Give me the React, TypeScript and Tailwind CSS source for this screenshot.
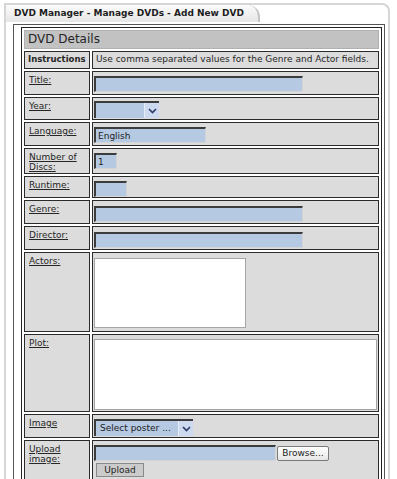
import type { ReactNode } from 'react';

const cell = 'border border-[#2b2b2b] bg-[#dcdcdc] align-top';
const blueInput =
  'block h-[16px] bg-[#b6c9e2] border-t-2 border-l-2 border-[#3c3c3c] border-r border-b border-r-[#d4d4d4] border-b-[#d4d4d4] px-[2px] text-[9px] leading-[12px] text-[#222]';

function Row({ label, h, children }: { label: ReactNode; h: string; children?: ReactNode }) {
  return (
    <tr>
      <td className={`${cell} px-[4px] pt-[3px] text-[9px] leading-[10px] ${h}`}>
        <span className="underline">{label}</span>
      </td>
      <td className={`${cell} px-[1px] pt-[2px] ${h}`}>{children}</td>
    </tr>
  );
}

function Chevron() {
  return (
    <svg width="9" height="6" viewBox="0 0 9 6">
      <path d="M1 1 L4.5 4.5 L8 1" stroke="#2a3a6a" strokeWidth="1.6" fill="none" />
    </svg>
  );
}

export default function App() {
  return (
    <div className="w-[397px] h-[479px] overflow-hidden bg-white text-[8.5px] text-[#262626] font-['DejaVu_Sans','Verdana',sans-serif]">
      <div className="ml-[4px] mt-[3px] w-[386px] h-[480px] border-2 border-b-0 border-[#d6d6d6] rounded-tr-[8px]">
        {/* Tab */}
        <div className="w-[254px] h-[17px] bg-gradient-to-b from-[#fbfbfb] to-[#e6e6e6] border-r-2 border-[#c4c4c4] rounded-tr-[12px] pl-[8px] pt-[3px] text-[9px] leading-[11px] font-bold text-[#1e1e1e] whitespace-nowrap">
          DVD Manager - Manage DVDs - Add New DVD
        </div>

        {/* Content box */}
        <div className="mt-[2px] ml-[7px] w-[372px] h-[470px] border-l border-t border-r border-[#555] pl-[7px] pt-[2px]">
          <table className="w-[361px] border border-[#222] border-separate border-spacing-[2px] table-fixed">
            <colgroup>
              <col className="w-[66px]" />
              <col />
            </colgroup>
            <tbody>
              <tr>
                <td colSpan={2} className="h-[19px] bg-[#c2c2c2] border border-[#b0b0b0] px-[3px] text-[12px] leading-[17px] text-[#262626]">
                  DVD Details
                </td>
              </tr>
              <tr>
                <td className={`${cell} h-[18px] px-[3px] font-bold leading-[15px]`}>Instructions</td>
                <td className={`${cell} h-[18px] px-[3px] text-[9px] leading-[15px] whitespace-nowrap`}>
                  Use comma separated values for the Genre and Actor fields.
                </td>
              </tr>

              <Row label="Title:" h="h-[24px]">
                <div className={`${blueInput} w-[209px] mt-[2px]`} />
              </Row>

              <Row label="Year:" h="h-[23px]">
                <div className="mt-[1px] flex h-[17px] w-[65px] border-t-2 border-l-2 border-[#3c3c3c] bg-[#b6c9e2]">
                  <div className="flex-1" />
                  <div className="w-[15px] flex items-center justify-center bg-[#cdd9ee] border-l border-[#e8eef8]">
                    <Chevron />
                  </div>
                </div>
              </Row>

              <Row label="Language:" h="h-[24px]">
                <div className={`${blueInput} w-[112px] mt-[2px] pt-[1px]`}>English</div>
              </Row>

              <Row
                label={
                  <>
                    Number of
                    <br />
                    Discs:
                  </>
                }
                h="h-[26px]"
              >
                <div className={`${blueInput} w-[23px] mt-[2px] pt-[1px]`}>1</div>
              </Row>

              <Row label="Runtime:" h="h-[22px]">
                <div className={`${blueInput} w-[33px] mt-[2px]`} />
              </Row>

              <Row label="Genre:" h="h-[24px]">
                <div className={`${blueInput} w-[209px] mt-[3px] bg-[#acc2e6]`} />
              </Row>

              <Row label="Director:" h="h-[24px]">
                <div className={`${blueInput} w-[209px] mt-[3px] bg-[#acc2e6]`} />
              </Row>

              <Row label="Actors:" h="h-[80px]">
                <div className="mt-[3px] h-[70px] w-[152px] bg-white border border-[#a6a6a6]" />
              </Row>

              <Row label="Plot:" h="h-[78px]">
                <div className="mt-[2px] h-[71px] w-[283px] bg-white border border-[#a6a6a6]" />
              </Row>

              <Row label="Image" h="h-[24px]">
                <div className="mt-[2px] flex h-[17px] w-[99px] border-t-2 border-l-2 border-[#3c3c3c] bg-[#b6c9e2]">
                  <div className="flex-1 pl-[4px] text-[9px] leading-[14px] text-[#222] whitespace-nowrap">Select poster ...</div>
                  <div className="w-[15px] flex items-center justify-center bg-[#cdd9ee] border-l border-[#e8eef8]">
                    <Chevron />
                  </div>
                </div>
              </Row>

              <Row
                label={
                  <>
                    Upload
                    <br />
                    image:
                  </>
                }
                h="h-[40px]"
              >
                <div className="mt-[2px] flex items-center gap-[1px]">
                  <div className={`${blueInput} w-[182px] h-[15px]`} />
                  <div className="h-[15px] w-[52px] rounded-[2px] border border-[#7a7a7a] bg-gradient-to-b from-white to-[#e6e6e6] text-center text-[9px] leading-[13px] text-[#222]">
                    Browse...
                  </div>
                </div>
                <div className="mt-[2px] ml-[2px] h-[14px] w-[48px] border border-[#8a8a8a] bg-[#cbcbcb] text-center text-[9px] leading-[12px] text-[#222]">
                  Upload
                </div>
              </Row>
            </tbody>
          </table>
        </div>
      </div>
    </div>
  );
}
